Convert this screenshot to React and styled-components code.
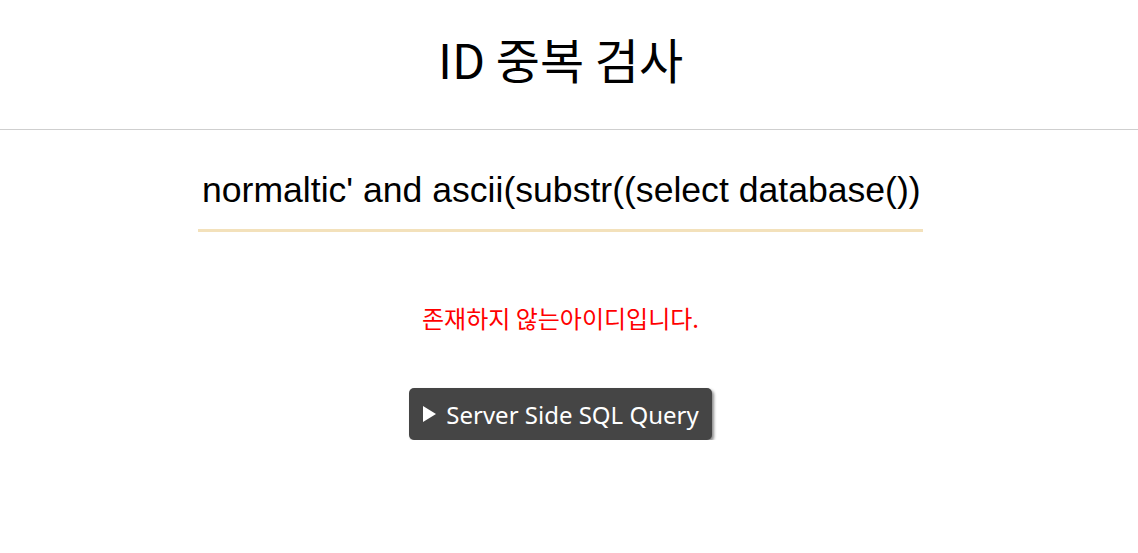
import styled, { createGlobalStyle } from 'styled-components';

const GlobalStyle = createGlobalStyle`
  body {
    margin: 0;
    background: #fff;
    font-family: "Noto Sans", "Noto Sans CJK KR", sans-serif;
  }
`;

export default function App() {
  const query = "normaltic' and ascii(substr((select database()),1,1))>0 #";

  return (
    <>
      <GlobalStyle />
      <Header>
        <Title>ID 중복 검사</Title>
      </Header>
      <Main>
        <SearchInput type="text" defaultValue={query} />
        <Message>존재하지 않는아이디입니다.</Message>
        <QueryButton type="button">
          <Arrow viewBox="0 0 13 16" aria-hidden="true">
            <path d="M0 0 L13 8 L0 16 Z" fill="currentColor" />
          </Arrow>
          Server Side SQL Query
        </QueryButton>
      </Main>
    </>
  );
}

const Header = styled.header`
  height: 129px;
  border-bottom: 1px solid #cfcfcf;
  display: flex;
  align-items: center;
  width: 100%;
`;

const Title = styled.h1`
  margin: 0;
  width: 1121px;
  text-align: center;
  font-family: "Noto Sans CJK KR", "Noto Sans", sans-serif;
  font-weight: 400;
  font-size: 48px;
  line-height: 1;
  color: #000;
  padding-bottom: 14px;
`;

const Main = styled.main`
  width: 1121px;
  display: flex;
  flex-direction: column;
  align-items: center;
  padding-top: 30px;
`;

const SearchInput = styled.input`
  width: 725px;
  height: 72px;
  box-sizing: border-box;
  border: none;
  border-bottom: 3px solid #f3e1bb;
  outline: none;
  padding: 8px 0 16px 4px;
  font-family: "Liberation Sans", Arial, sans-serif;
  font-size: 35.6px;
  color: #000;
  background: transparent;
`;

const Message = styled.p`
  margin: 69px 0 0;
  color: #ff0000;
  font-family: "Noto Sans CJK KR", sans-serif;
  font-size: 24px;
  line-height: 34px;
`;

const QueryButton = styled.button`
  margin-top: 53px;
  display: flex;
  align-items: center;
  gap: 10px;
  height: 52px;
  padding: 0 13px 0 14px;
  border: none;
  border-radius: 5px;
  background: #454545;
  color: #fff;
  font-family: "Noto Sans", sans-serif;
  font-size: 24px;
  box-shadow: 2px 2px 3px rgba(0, 0, 0, 0.45);
  cursor: pointer;
`;

const Arrow = styled.svg`
  width: 13px;
  height: 16px;
  flex-shrink: 0;
`;
